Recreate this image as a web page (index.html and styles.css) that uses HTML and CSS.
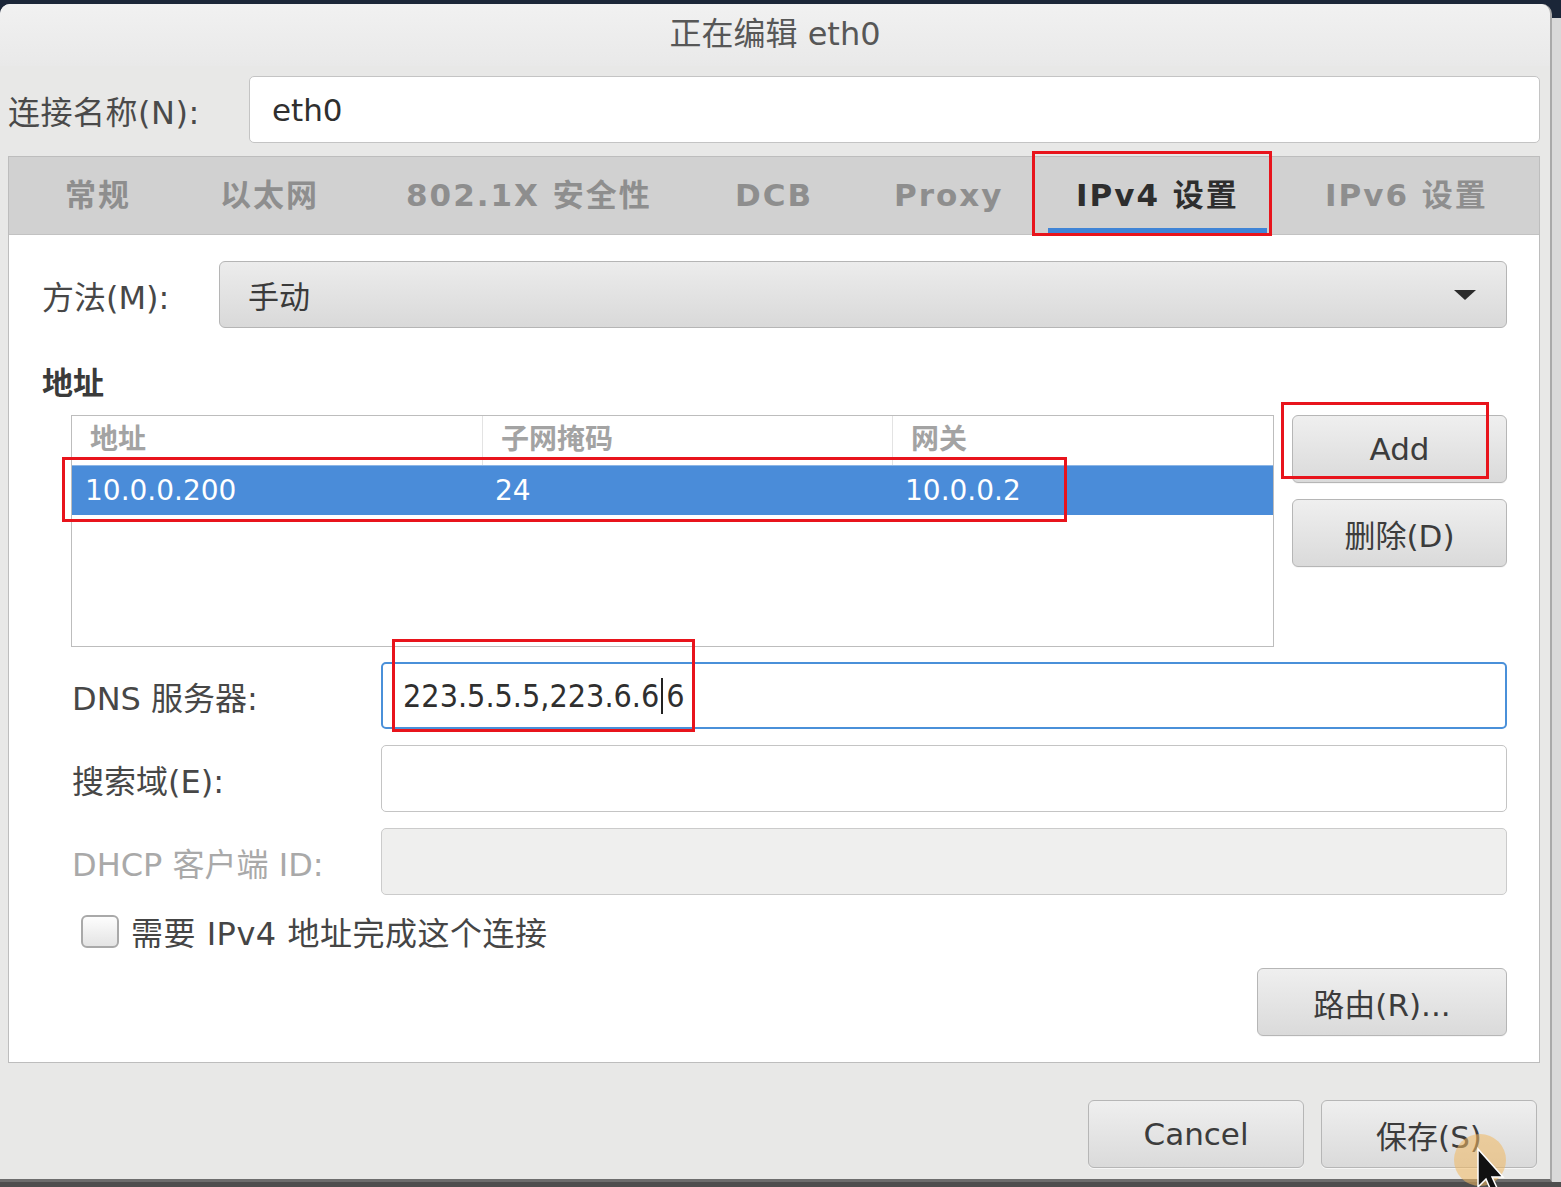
FILE: index.html
```html
<!DOCTYPE html>
<html>
	<head>
		<meta charset="UTF-8">
		<title>正在编辑 eth0</title>
		<link rel="stylesheet" href="styles.css">
	</head>
	<body>

		<div class="dialog">
			<div class="titlebar">正在编辑 eth0</div>

			<div class="name-row">
				<span class="name-label">连接名称(N):</span>
				<div class="entry name-entry">eth0</div>
			</div>

			<div class="notebook">
				<div class="tabs">
					<div class="tab">常规</div>
					<div class="tab">以太网</div>
					<div class="tab">802.1X 安全性</div>
					<div class="tab">DCB</div>
					<div class="tab">Proxy</div>
					<div class="tab active">IPv4 设置</div>
					<div class="tab">IPv6 设置</div>
				</div>

				<div class="page">
					<div class="method-row">
						<span class="label">方法(M):</span>
						<div class="combo">
							<span>手动</span>
							<span class="arrow"></span>
						</div>
					</div>

					<div class="section-title">地址</div>

					<div class="addr-block">
						<div class="addr-table">
							<div class="addr-head">
								<div>地址</div>
								<div>子网掩码</div>
								<div>网关</div>
							</div>
							<div class="addr-row selected">
								<div>10.0.0.200</div>
								<div>24</div>
								<div>10.0.0.2</div>
							</div>
						</div>
						<div class="addr-buttons">
							<button class="btn">Add</button>
							<button class="btn">删除(D)</button>
						</div>
					</div>

					<div class="form-grid">
						<span class="label">DNS 服务器:</span>
						<div class="entry focused"><span class="dns-text">223.5.5.5,223.6.6<span class="caret"></span>6</span></div>

						<span class="label">搜索域(E):</span>
						<div class="entry"></div>

						<span class="label dim">DHCP 客户端 ID:</span>
						<div class="entry disabled"></div>
					</div>

					<div class="check-row">
						<span class="checkbox"></span>
						<span>需要 IPv4 地址完成这个连接</span>
					</div>

					<div class="routes-row">
						<button class="btn routes">路由(R)...</button>
					</div>
				</div>
			</div>

			<div class="actions">
				<button class="btn action">Cancel</button>
				<button class="btn action">保存(S)</button>
			</div>
		</div>

		<!-- 标注框 -->
		<div class="mark mark-tab"></div>
		<div class="mark mark-add"></div>
		<div class="mark mark-row"></div>
		<div class="mark mark-dns"></div>

		<div class="pointer">
			<svg width="70" height="70" viewBox="0 0 70 70">
				<circle cx="28" cy="27" r="26" fill="#f0b860" fill-opacity="0.55"/>
				<path d="M26 16 L26 54 L34 46 L40 60 L46 57 L40 44 L51 44 Z" fill="#111" stroke="#fff" stroke-width="1.5"/>
			</svg>
		</div>

	</body>
</html>
```

FILE: styles.css
```css
html, body{
	margin: 0;
	padding: 0;
}

body{
	width: 1561px;
	height: 1187px;
	overflow: hidden;
	position: relative;
	font-family: "DejaVu Sans", "Noto Sans CJK SC", sans-serif;
	color: #444;
	background:
		linear-gradient(#1b2638 0, #1b2638 18px, transparent 18px),
		linear-gradient(to top, #4e4e4e 0, #4e4e4e 5px, #d9d9d9 5px);
}

.dialog{
	margin-top: 4px;
	width: 1552px;
	height: 1178px;
	box-sizing: border-box;
	background-color: #e8e8e7;
	border-radius: 10px 10px 0 0;
	border-right: 2px solid #a9a9a9;
	border-bottom: 3px solid #6d6d6d;
	display: flex;
	flex-direction: column;
}

.titlebar{
	height: 62px;
	line-height: 60px;
	text-align: center;
	font-size: 32px;
	color: #575757;
	border-radius: 10px 10px 0 0;
	background: linear-gradient(#f1f1f1, #e9e9e9);
}

.name-row{
	margin-top: 10px;
	padding-left: 8px;
	display: flex;
	align-items: center;
	height: 67px;
}
.name-label{
	width: 241px;
	font-size: 32px;
	letter-spacing: 0.5px;
	color: #4a4a4a;
}

.entry{
	box-sizing: border-box;
	background-color: #fff;
	border: 1px solid #c4c4c4;
	border-radius: 5px;
	display: flex;
	align-items: center;
	padding-left: 22px;
	font-size: 31px;
	color: #2f2f2f;
}
.name-entry{
	flex: 1;
	height: 67px;
	margin-right: 10px;
}
.entry.focused{
	border: 2px solid #4a90d9;
	padding-left: 20px;
}
.entry.disabled{
	background-color: #efefee;
	border-color: #cbcbcb;
}

.dns-text{
	font-stretch: condensed;
	font-size: 32px;
}
.caret{
	display: inline-block;
	width: 2px;
	height: 36px;
	margin: 0 3px 0 2px;
	vertical-align: -7px;
	background-color: #222;
}

/* notebook */
.notebook{
	margin: 13px 10px 0 8px;
	border: 1px solid #bdbdbd;
	background-color: #fff;
}
.tabs{
	height: 78px;
	box-sizing: border-box;
	padding-left: 28px;
	background-color: #d1d1d1;
	border-bottom: 1px solid #c2c2c2;
	display: grid;
	grid-template-columns: 155px 186px 329px 159px 182px 249px 218px;
}
.tab{
	position: relative;
	padding-left: 28px;
	line-height: 77px;
	font-size: 31px;
	font-weight: bold;
	letter-spacing: 2px;
	color: #8e8e8e;
	white-space: nowrap;
}
.tab.active{
	color: #2e2e2e;
}
.tab.active:after{
	content: "";
	position: absolute;
	left: 0;
	bottom: -1px;
	width: 219px;
	height: 7px;
	background-color: #3f84d6;
}

.page{
	padding: 26px 32px 26px 33px;
}

.label{
	font-size: 32px;
	color: #474747;
}
.label.dim{
	color: #a9a9a9;
}

.method-row{
	display: grid;
	grid-template-columns: 177px 1fr;
	align-items: center;
	height: 67px;
}
.combo{
	height: 67px;
	box-sizing: border-box;
	border: 1px solid #b5b5b5;
	border-radius: 6px;
	background: linear-gradient(#ececec, #d9d9d9);
	display: flex;
	align-items: center;
	justify-content: space-between;
	padding: 0 30px 0 28px;
	font-size: 31px;
	color: #3a3a3a;
}
.arrow{
	width: 0;
	height: 0;
	border-left: 11px solid transparent;
	border-right: 11px solid transparent;
	border-top: 10px solid #2b2b2b;
}

.section-title{
	margin-top: 35px;
	line-height: 40px;
	font-size: 31px;
	font-weight: bold;
	color: #3a3a3a;
}

.addr-block{
	margin: 12px 0 0 29px;
	display: flex;
	gap: 18px;
	height: 232px;
}
.addr-table{
	flex: 1;
	border: 1px solid #bdbdbd;
	background-color: #fff;
}
.addr-head,
.addr-row{
	display: grid;
	grid-template-columns: 410px 410px 1fr;
}
.addr-head{
	height: 49px;
	line-height: 47px;
	font-size: 28px;
	font-weight: bold;
	color: #a3a3a3;
}
.addr-head div{
	padding-left: 18px;
}
.addr-head div + div{
	border-left: 1px solid #e3e3e3;
}
.addr-row{
	height: 50px;
	line-height: 50px;
	font-size: 28px;
}
.addr-row div{
	padding-left: 13px;
}
.addr-row.selected{
	background-color: #4a8cd9;
	border-top: 1px solid #8db6e6;
	box-sizing: border-box;
	color: #fff;
}

.addr-buttons{
	width: 215px;
	display: flex;
	flex-direction: column;
	gap: 16px;
}

.btn{
	box-sizing: border-box;
	height: 68px;
	border: 1px solid #b6b6b6;
	border-radius: 6px;
	background: linear-gradient(#efefef, #dadada);
	font-family: "DejaVu Sans", "Noto Sans CJK SC", sans-serif;
	font-size: 31px;
	color: #3c3c3c;
	padding: 0;
	box-shadow: 0 1px 0 #f6f6f6;
}

.form-grid{
	margin-top: 15px;
	padding-left: 30px;
	display: grid;
	grid-template-columns: 309px 1fr;
	grid-auto-rows: 67px;
	row-gap: 16px;
	align-items: center;
}
.form-grid .entry{
	height: 67px;
}

.check-row{
	margin: 19px 0 0 39px;
	display: flex;
	align-items: center;
	gap: 12px;
	font-size: 32px;
	letter-spacing: 0.5px;
	color: #454545;
	height: 34px;
}
.checkbox{
	width: 38px;
	height: 33px;
	box-sizing: border-box;
	border: 2px solid #a9a9a9;
	border-radius: 6px;
	background: linear-gradient(#fdfdfd, #e4e4e4);
}

.routes-row{
	margin-top: 20px;
	display: flex;
	justify-content: flex-end;
}
.routes{
	width: 250px;
}

.actions{
	margin-top: 37px;
	padding-right: 13px;
	display: flex;
	justify-content: flex-end;
	gap: 17px;
}
.action{
	width: 216px;
}

/* 红色标注框 */
.mark{
	position: absolute;
	box-sizing: border-box;
	border: 3px solid #e8141c;
}
.mark-tab{
	left: 1032px;
	top: 151px;
	width: 240px;
	height: 85px;
}
.mark-add{
	left: 1281px;
	top: 402px;
	width: 208px;
	height: 77px;
}
.mark-row{
	left: 62px;
	top: 457px;
	width: 1005px;
	height: 65px;
}
.mark-dns{
	left: 392px;
	top: 639px;
	width: 303px;
	height: 93px;
}

.pointer{
	position: absolute;
	left: 1452px;
	top: 1133px;
}
```
